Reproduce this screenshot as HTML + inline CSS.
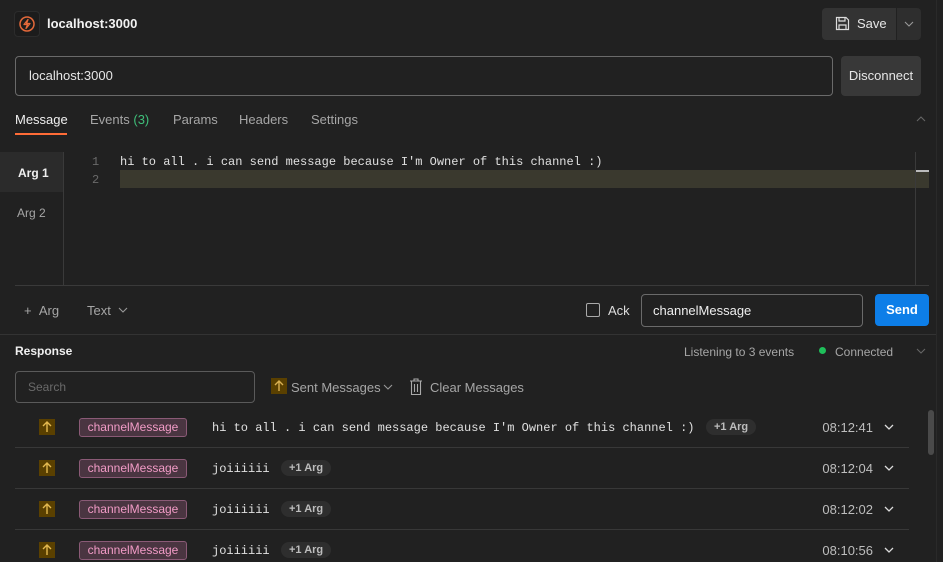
<!DOCTYPE html>
<html><head><meta charset="utf-8"><style>
*{box-sizing:border-box;margin:0;padding:0}
body{width:943px;height:562px;background:#212121;font-family:"Liberation Sans",Arial,sans-serif;color:#e6e6e6;position:relative;overflow:hidden;font-size:13px}
.a{position:absolute}
.mono{font-family:"Liberation Mono","DejaVu Sans Mono",monospace}
.gray{color:#a6a6a6}
.tag{position:absolute;left:79px;width:108px;height:19px;border:1px solid #8a5a76;background:#4a3541;border-radius:3px;color:#f19bc6;font-size:12px;text-align:center;line-height:17px}
.up{position:absolute;left:39px;width:16px;height:16px;background:#5a4000}
.pill{position:absolute;height:16px;border-radius:8px;background:#2e2e2e;color:#bdbdbd;font-size:11px;font-weight:bold;line-height:16px;padding:0 8px}
.sep{position:absolute;left:15px;width:894px;height:1px;background:#383838}
.time{position:absolute;right:70px;color:#bdbdbd}
</style></head><body>
<div class="a" style="left:936px;top:0;width:1px;height:562px;background:#2a2a2a"></div>
<div class="a" style="left:14px;top:11px;width:26px;height:26px;border-radius:4px;background:#1c1c1c;border:1px solid #2c2c2c"></div>
<svg class="a" style="left:17px;top:14px" width="20" height="20" viewBox="0 0 20 20"><circle cx="10" cy="10" r="7" fill="none" stroke="#e4693a" stroke-width="1.5"/><path d="M11 5.5 L7 10.5 H10.5 L9 14.5 L13 9.5 H9.5 Z" fill="none" stroke="#e4693a" stroke-width="1.3" stroke-linejoin="round"/></svg>
<div class="a" style="left:47px;top:16px;font-weight:bold;font-size:13px;color:#f2f2f2">localhost:3000</div>
<div class="a" style="left:822px;top:8px;width:74px;height:32px;background:#333;border-radius:4px 0 0 4px"></div>
<svg class="a" style="left:835px;top:16px" width="15" height="15" viewBox="0 0 15 15"><path d="M1.5 1.5H11L13.5 4V13.5H1.5Z M4 1.5V5H10V1.5 M4 13.5V9H11V13.5" fill="none" stroke="#ddd" stroke-width="1.2"/></svg>
<div class="a" style="left:857px;top:16px;color:#e6e6e6">Save</div>
<div class="a" style="left:897px;top:8px;width:24px;height:32px;background:#2e2e2e;border-radius:0 4px 4px 0"></div>
<svg class="a" style="left:904px;top:20px" width="10" height="8"><path d="M1 2L5 6L9 2" fill="none" stroke="#999" stroke-width="1.1"/></svg>
<div class="a" style="left:15px;top:56px;width:818px;height:40px;border:1px solid #6a6a6a;border-radius:4px"></div>
<div class="a" style="left:29px;top:68px;color:#e6e6e6">localhost:3000</div>
<div class="a" style="left:841px;top:56px;width:80px;height:40px;background:#383838;border-radius:4px;text-align:center;line-height:40px;color:#e6e6e6">Disconnect</div>
<div class="a" style="left:15px;top:112px;color:#f0f0f0">Message</div>
<div class="a" style="left:15px;top:133px;width:52px;height:2px;background:#ff6c37"></div>
<div class="a gray" style="left:90px;top:112px">Events <span style="color:#3fbf7a">(3)</span></div>
<div class="a gray" style="left:173px;top:112px">Params</div>
<div class="a gray" style="left:239px;top:112px">Headers</div>
<div class="a gray" style="left:311px;top:112px">Settings</div>
<svg class="a" style="left:916px;top:115px" width="10" height="8"><path d="M1 6L5 2L9 6" fill="none" stroke="#666" stroke-width="1.1"/></svg>
<div class="a" style="left:0;top:152px;width:63px;height:40px;background:#2b2b2b"></div>
<div class="a" style="left:63px;top:152px;width:1px;height:133px;background:#3a3a3a"></div>
<div class="a" style="left:18px;top:166px;font-weight:bold;font-size:12px;color:#f0f0f0">Arg 1</div>
<div class="a gray" style="left:17px;top:206px;font-size:12px">Arg 2</div>
<div class="a mono" style="left:92px;top:155px;color:#6a6a6a;font-size:12px">1</div>
<div class="a mono" style="left:92px;top:173px;color:#6a6a6a;font-size:12px">2</div>
<div class="a" style="left:120px;top:170px;width:809px;height:18px;background:#3a392e"></div>
<div class="a mono" style="left:120px;top:155px;font-size:12px;color:#e0e0e0;white-space:pre">hi to all . i can send message because I'm Owner of this channel :)</div>
<div class="a" style="left:915px;top:152px;width:1px;height:133px;background:#3a3a3a"></div>
<div class="a" style="left:916px;top:170px;width:13px;height:2px;background:#bbb"></div>
<div class="a" style="left:15px;top:285px;width:914px;height:1px;background:#3a3a3a"></div>
<div class="a gray" style="left:24px;top:303px">+ &nbsp;Arg</div>
<div class="a gray" style="left:87px;top:303px">Text</div>
<svg class="a" style="left:118px;top:306px" width="10" height="8"><path d="M1 2L5 6L9 2" fill="none" stroke="#999" stroke-width="1.1"/></svg>
<div class="a" style="left:586px;top:303px;width:14px;height:14px;border:1px solid #aaa;border-radius:2px"></div>
<div class="a" style="left:608px;top:303px;color:#ddd">Ack</div>
<div class="a" style="left:641px;top:294px;width:222px;height:33px;border:1px solid #6a6a6a;border-radius:4px"></div>
<div class="a" style="left:653px;top:303px;color:#eee">channelMessage</div>
<div class="a" style="left:875px;top:294px;width:54px;height:32px;background:#0d7ee8;border-radius:4px;color:#fff;font-weight:bold;text-align:center;line-height:32px">Send</div>
<div class="a" style="left:0;top:334px;width:936px;height:1px;background:#333"></div>
<div class="a" style="left:15px;top:344px;font-weight:bold;font-size:12px;color:#f0f0f0">Response</div>
<div class="a gray" style="left:684px;top:345px;font-size:12px">Listening to 3 events</div>
<div class="a" style="left:819px;top:347px;width:7px;height:7px;border-radius:50%;background:#1fbf5a"></div>
<div class="a gray" style="left:835px;top:345px;font-size:12px">Connected</div>
<svg class="a" style="left:916px;top:347px" width="10" height="8"><path d="M1 2L5 6L9 2" fill="none" stroke="#666" stroke-width="1.1"/></svg>
<div class="a" style="left:15px;top:371px;width:240px;height:32px;border:1px solid #5a5a5a;border-radius:4px"></div>
<div class="a" style="left:28px;top:380px;color:#6a6a6a;font-size:12px">Search</div>
<div class="a" style="left:271px;top:378px;width:16px;height:16px;background:#5a4000"></div>
<svg class="a" style="left:271px;top:378px" width="16" height="16"><path d="M8 13V3M4 7L8 3L12 7" fill="none" stroke="#d9b052" stroke-width="1.4"/></svg>
<div class="a gray" style="left:291px;top:380px">Sent Messages</div>
<svg class="a" style="left:383px;top:383px" width="10" height="8"><path d="M1 2L5 6L9 2" fill="none" stroke="#999" stroke-width="1.1"/></svg>
<svg class="a" style="left:408px;top:378px" width="16" height="18"><path d="M2 3H14M6 3V1H10V3M3.5 3V16.5H12.5V3M6.5 6V14M9.5 6V14" fill="none" stroke="#aaa" stroke-width="1.1"/></svg>
<div class="a gray" style="left:430px;top:380px">Clear Messages</div>

<div class="up" style="top:419px"></div><svg class="a" style="left:39px;top:419px" width="16" height="16"><path d="M8 13V3M4 7L8 3L12 7" fill="none" stroke="#e4b94f" stroke-width="1.4"/></svg>
<div class="tag" style="top:418px">channelMessage</div>
<div class="a mono" style="left:212px;top:421px;font-size:12px;white-space:pre;color:#e0e0e0">hi to all . i can send message because I'm Owner of this channel :)</div>
<div class="pill" style="left:706px;top:419px">+1 Arg</div>
<div class="time" style="top:420px">08:12:41</div>
<svg class="a" style="left:884px;top:423px" width="10" height="8"><path d="M1 2L5 6L9 2" fill="none" stroke="#ddd" stroke-width="1.3"/></svg>
<div class="sep" style="top:447px"></div>

<div class="up" style="top:460px"></div><svg class="a" style="left:39px;top:460px" width="16" height="16"><path d="M8 13V3M4 7L8 3L12 7" fill="none" stroke="#e4b94f" stroke-width="1.4"/></svg>
<div class="tag" style="top:459px">channelMessage</div>
<div class="a mono" style="left:212px;top:462px;font-size:12px;color:#e0e0e0">joiiiiii</div>
<div class="pill" style="left:281px;top:460px">+1 Arg</div>
<div class="time" style="top:461px">08:12:04</div>
<svg class="a" style="left:884px;top:464px" width="10" height="8"><path d="M1 2L5 6L9 2" fill="none" stroke="#ddd" stroke-width="1.3"/></svg>
<div class="sep" style="top:488px"></div>

<div class="up" style="top:501px"></div><svg class="a" style="left:39px;top:501px" width="16" height="16"><path d="M8 13V3M4 7L8 3L12 7" fill="none" stroke="#e4b94f" stroke-width="1.4"/></svg>
<div class="tag" style="top:500px">channelMessage</div>
<div class="a mono" style="left:212px;top:503px;font-size:12px;color:#e0e0e0">joiiiiii</div>
<div class="pill" style="left:281px;top:501px">+1 Arg</div>
<div class="time" style="top:502px">08:12:02</div>
<svg class="a" style="left:884px;top:505px" width="10" height="8"><path d="M1 2L5 6L9 2" fill="none" stroke="#ddd" stroke-width="1.3"/></svg>
<div class="sep" style="top:529px"></div>

<div class="up" style="top:542px"></div><svg class="a" style="left:39px;top:542px" width="16" height="16"><path d="M8 13V3M4 7L8 3L12 7" fill="none" stroke="#e4b94f" stroke-width="1.4"/></svg>
<div class="tag" style="top:541px">channelMessage</div>
<div class="a mono" style="left:212px;top:544px;font-size:12px;color:#e0e0e0">joiiiiii</div>
<div class="pill" style="left:281px;top:542px">+1 Arg</div>
<div class="time" style="top:543px">08:10:56</div>
<svg class="a" style="left:884px;top:546px" width="10" height="8"><path d="M1 2L5 6L9 2" fill="none" stroke="#ddd" stroke-width="1.3"/></svg>

<div class="a" style="left:928px;top:410px;width:6px;height:45px;border-radius:3px;background:#4a4a4a"></div>
</body></html>
